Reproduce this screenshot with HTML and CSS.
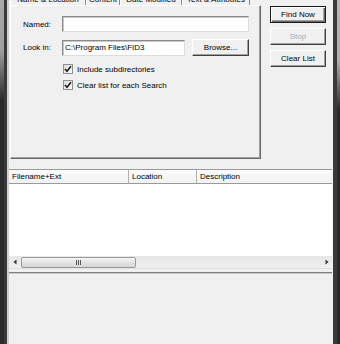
FILE: index.html
```html
<!DOCTYPE html>
<html>
<head>
<meta charset="utf-8">
<link rel="stylesheet" href="styles.css">
</head>
<body>
<div class="window">
  <div class="edge edge-left"></div>
  <div class="content">
    <div class="top">
      <div class="tabctl">
        <div class="tabs">
          <div class="tab t1 sel">Name &amp; Location</div>
          <div class="tab t2">Content</div>
          <div class="tab t3">Date Modified</div>
          <div class="tab t4">Text &amp; Attributes</div>
        </div>
        <div class="panel">
          <div class="row r-named">
            <span class="lbl">Named:</span>
            <div class="field f-named"></div>
          </div>
          <div class="row r-look">
            <span class="lbl">Look in:</span>
            <div class="field f-look">C:\Program Files\FID3</div>
            <div class="btn browse">Browse...</div>
          </div>
          <div class="chk-row first">
            <span class="chk"><svg width="8" height="8" viewBox="0 0 8 8"><path d="M1 4 L3 6.2 L7 1.2" fill="none" stroke="#1a1a1a" stroke-width="1.6"/></svg></span>
            <span>Include subdirectories</span>
          </div>
          <div class="chk-row">
            <span class="chk"><svg width="8" height="8" viewBox="0 0 8 8"><path d="M1 4 L3 6.2 L7 1.2" fill="none" stroke="#1a1a1a" stroke-width="1.6"/></svg></span>
            <span>Clear list for each Search</span>
          </div>
        </div>
      </div>
      <div class="actions">
        <div class="btn default">Find Now</div>
        <div class="btn disabled">Stop</div>
        <div class="btn">Clear List</div>
      </div>
    </div>
    <div class="results">
      <div class="header">
        <div class="col c1">Filename+Ext</div>
        <div class="col c2">Location</div>
        <div class="col c3">Description</div>
      </div>
      <div class="rows"></div>
      <div class="hscroll">
        <div class="arrow left"><svg width="4" height="6" viewBox="0 0 4 6"><path d="M3.5 0.5 L0.5 3 L3.5 5.5 Z" fill="#333"/></svg></div>
        <div class="thumb"><span class="grip"></span></div>
        <div class="track"></div>
        <div class="arrow right"><svg width="4" height="6" viewBox="0 0 4 6"><path d="M0.5 0.5 L3.5 3 L0.5 5.5 Z" fill="#333"/></svg></div>
      </div>
    </div>
    <div class="status"></div>
  </div>
  <div class="edge edge-right"></div>
</div>
</body>
</html>
```
FILE: styles.css
```css
* { box-sizing: border-box; }
html, body { margin: 0; padding: 0; }
body {
  width: 340px;
  height: 344px;
  overflow: hidden;
  background: #f0f0f0;
  font-family: "Liberation Sans", Arial, sans-serif;
  font-size: 8px;
  color: #000;
}
.window { display: flex; height: 344px; }
.edge { width: 7px; flex: none; }
.edge-left {
  background:
    linear-gradient(to right, transparent 0 4px, #3a3a3a 4px 7px),
    linear-gradient(to bottom, #a8a8a8 0, #a0a0a0 50px, #2a2a2a 100px);
}
.edge-right {
  background:
    linear-gradient(to right, #3a3a3a 0 4px, transparent 4px),
    linear-gradient(to bottom, #b8b8b8 0, #b0b0b0 60px, #2a2a2a 110px);
}
.content {
  flex: 1;
  display: flex;
  flex-direction: column;
  background: #f0f0f0;
  border-left: 2px solid #d0d0d0;
}
.top { display: flex; height: 160px; flex: none; }
.tabctl { margin-left: 1px; width: 251px; display: flex; flex-direction: column; }
.tabs { display: flex; height: 11px; margin-top: -6px; }
.tab {
  height: 11px;
  line-height: 12px;
  text-align: center;
  border-left: 1px solid #fff;
  border-right: 1px solid #8a8a8a;
  white-space: nowrap;
}
.t1 { width: 76px; }
.t2 { width: 34px; }
.t3 { width: 62px; }
.t4 { width: 68px; }
.panel {
  height: 154px;
  border-top: 1px solid #fff;
  border-left: 1px solid #fff;
  border-right: 1px solid #696969;
  border-bottom: 1px solid #696969;
  box-shadow: inset -1px -1px 0 #a0a0a0;
  padding: 10px 0 0 12px;
  display: flex;
  flex-direction: column;
}
.row { display: flex; align-items: center; }
.r-named { height: 16px; }
.r-look { height: 17px; margin-top: 7px; }
.lbl { width: 39px; flex: none; }
.field {
  height: 16px;
  background: #fff;
  border-top: 1px solid #8a8a8a;
  border-left: 1px solid #8a8a8a;
  border-right: 1px solid #dcdcdc;
  border-bottom: 1px solid #dcdcdc;
  box-shadow: inset 1px 1px 0 #c8c8c8;
  line-height: 14px;
  padding-left: 2px;
  white-space: nowrap;
}
.f-named { width: 187px; }
.f-look { width: 123px; }
.btn {
  height: 17px;
  background: #f0f0f0;
  border-top: 1px solid #fff;
  border-left: 1px solid #fff;
  border-right: 1px solid #404040;
  border-bottom: 1px solid #404040;
  box-shadow: inset -1px -1px 0 #a0a0a0;
  display: flex;
  align-items: center;
  justify-content: center;
  white-space: nowrap;
}
.browse { width: 57px; margin-left: 7px; }
.chk-row { display: flex; align-items: center; height: 12px; margin-top: 4px; margin-left: 40px; gap: 4px; }
.chk-row.first { margin-top: 7px; }
.chk {
  width: 10px;
  height: 10px;
  border: 1px solid #8e8f8f;
  background: linear-gradient(135deg, #dcdcdc, #fafafa);
  display: flex;
  align-items: center;
  justify-content: center;
}
.chk svg { display: block; }
.actions {
  margin-left: 9px;
  width: 56px;
  padding-top: 6px;
  display: flex;
  flex-direction: column;
  gap: 5px;
}
.btn.default {
  border: 1px solid #1a1a1a;
  box-shadow: inset 1px 1px 0 #fff, inset -1px -1px 0 #696969, inset -2px -2px 0 #a0a0a0;
}
.btn.disabled { color: #a0a0a0; text-shadow: 1px 1px 0 #fff; }
.results {
  margin-top: 9px;
  margin-right: 1px;
  display: flex;
  flex-direction: column;
  flex: none;
}
.header {
  display: flex;
  height: 15px;
  border-top: 1px solid #9a9a9a;
  border-bottom: 1px solid #9a9a9a;
  background: linear-gradient(#fbfbfb, #f1f1f1);
}
.col { line-height: 14px; padding-left: 3px; border-right: 1px solid #b0b0b0; white-space: nowrap; }
.c1 { width: 120px; }
.c2 { width: 68px; }
.c3 { flex: 1; border-right: none; }
.rows { height: 72px; background: #fff; }
.hscroll {
  height: 13px;
  display: flex;
  align-items: center;
  background: linear-gradient(#e6e6e6, #f0f0f0);
  border-bottom: 1px solid #e0e0e0;
}
.arrow { width: 11px; height: 13px; display: flex; align-items: center; justify-content: center; flex: none; }
.thumb {
  width: 115px;
  height: 11px;
  margin-left: 1px;
  border: 1px solid #9a9a9a;
  border-radius: 2px;
  background: linear-gradient(#f6f6f6, #e2e2e2 55%, #d6d6d6);
  display: flex;
  align-items: center;
  justify-content: center;
  flex: none;
}
.grip {
  width: 5px;
  height: 5px;
  background: linear-gradient(to right, #555 0 1px, transparent 1px 2px, #555 2px 3px, transparent 3px 4px, #555 4px 5px);
}
.track { flex: 1; }
.status {
  margin-top: 3px;
  flex: 1;
  border-top: 1px solid #808080;
  box-shadow: inset 0 1px 0 #c8c8c8;
  margin-right: 1px;
}
```
